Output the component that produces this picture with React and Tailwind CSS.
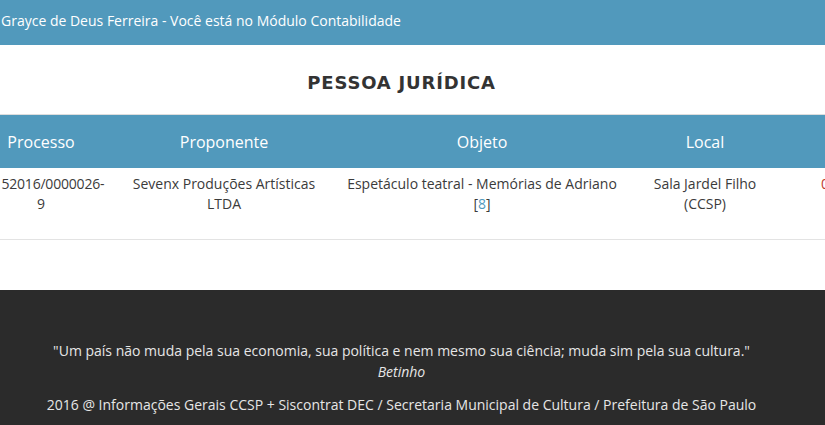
import React from 'react';

const columns = [
  { title: 'Processo', width: 'w-[142px]' },
  { title: 'Proponente', width: 'w-[224px]' },
  { title: 'Objeto', width: 'w-[292px]' },
  { title: 'Local', width: 'w-[154px]' },
  { title: 'Data', width: 'w-[160px]' },
];

const App = () => {
  return (
    <div className="w-[825px] h-[425px] overflow-hidden bg-white font-['Open_Sans',sans-serif] text-[14px] text-[#333]">
      <div className="h-[45px] bg-[#5199bc] text-white flex items-center pl-[1px] pb-[4px]">
        Grayce de Deus Ferreira - Você está no Módulo Contabilidade
      </div>

      <h1 className="h-[69px] flex items-center justify-center pr-[22px] pt-[6px] font-['DejaVu_Sans',sans-serif] font-bold text-[18px] tracking-[0.8px] text-[#333]">
        PESSOA JURÍDICA
      </h1>

      <div className="overflow-hidden">
        <div className="ml-[-30px] w-max border-t border-[#ddd]">
          <div className="flex h-[53px] bg-[#5199bc] text-white text-[16px]">
            {columns.map((c) => (
              <div key={c.title} className={`${c.width} flex items-center justify-center px-2`}>
                {c.title}
              </div>
            ))}
          </div>
          <div className="flex h-[72px] border-b border-[#e3e3e3] leading-[20px] text-center text-[#3b3b3b]">
            <div className="w-[142px] px-2 pt-[6px] tracking-[-0.2px]">60152016/0000026-9</div>
            <div className="w-[224px] px-2 pt-[6px]">Sevenx Produções Artísticas LTDA</div>
            <div className="w-[292px] px-2 pt-[6px]">
              Espetáculo teatral - Memórias de Adriano <span>[<span className="text-[#5199bc]">8</span>]</span>
            </div>
            <div className="w-[154px] px-[24px] pt-[6px]">Sala Jardel Filho (CCSP)</div>
            <div className="w-[160px] pl-[39px] pt-[6px] text-left text-[#c0392b]">09/05/2016</div>
          </div>
        </div>
      </div>

      <div className="mt-[50px] h-[135px] bg-[#2b2b2b] text-[#e6e6e6] text-center pt-[50px] pr-[22px]">
        <p className="leading-[21px]">
          "Um país não muda pela sua economia, sua política e nem mesmo sua ciência; muda sim pela sua cultura."
        </p>
        <p className="italic leading-[21px]">Betinho</p>
        <p className="mt-[12px] leading-[21px]">
          2016 @ Informações Gerais CCSP + Siscontrat DEC / Secretaria Municipal de Cultura / Prefeitura de São Paulo
        </p>
      </div>
    </div>
  );
};

export default App;
